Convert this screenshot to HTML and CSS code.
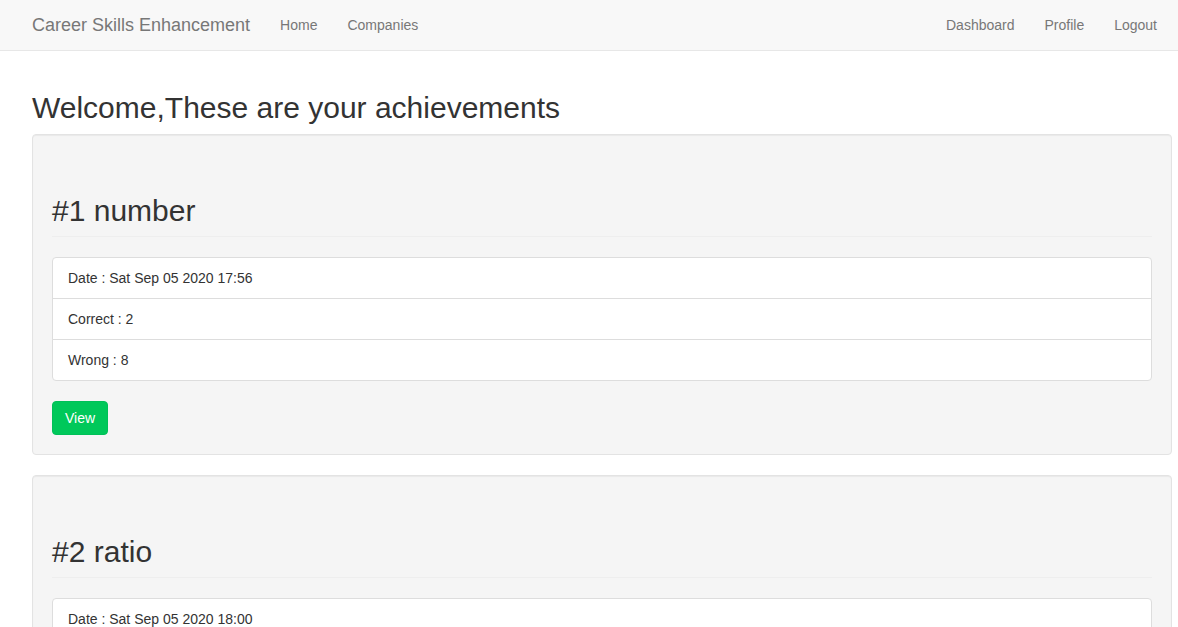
FILE: index.html
```html
<!DOCTYPE html>
<html>
<head>
<meta charset="utf-8">
<title>Career Skills Enhancement</title>
<link rel="stylesheet" href="styles.css">
</head>
<body>
<nav class="navbar">
  <div class="nav-inner">
    <div class="nav-left">
      <a class="brand" href="#">Career Skills Enhancement</a>
      <a class="nav-link" href="#">Home</a>
      <a class="nav-link" href="#">Companies</a>
    </div>
    <div class="nav-right">
      <a class="nav-link" href="#">Dashboard</a>
      <a class="nav-link" href="#">Profile</a>
      <a class="nav-link" href="#">Logout</a>
    </div>
  </div>
</nav>
<main class="main">
  <h2 class="title">Welcome,These are your achievements</h2>
  <div class="well">
    <h2 class="page-header">#1 number</h2>
    <ul class="list-group">
      <li class="list-item">Date : Sat Sep 05 2020 17:56</li>
      <li class="list-item">Correct : 2</li>
      <li class="list-item">Wrong : 8</li>
    </ul>
    <a class="btn" href="#">View</a>
  </div>
  <div class="well">
    <h2 class="page-header">#2 ratio</h2>
    <ul class="list-group">
      <li class="list-item">Date : Sat Sep 05 2020 18:00</li>
      <li class="list-item">Correct : 3</li>
      <li class="list-item">Wrong : 7</li>
    </ul>
    <a class="btn" href="#">View</a>
  </div>
</main>
</body>
</html>
```
FILE: styles.css
```css
* { box-sizing: border-box; }
html, body { margin: 0; padding: 0; }
body {
  font-family: "Liberation Sans", Arial, Helvetica, sans-serif;
  font-size: 14px;
  line-height: 1.42857;
  color: #333;
  background: #fff;
}
a { text-decoration: none; }
.navbar {
  background: #f8f8f8;
  border-bottom: 1px solid #e7e7e7;
  margin-bottom: 20px;
}
.nav-inner {
  display: flex;
  justify-content: space-between;
  padding: 0 6px 0 17px;
  height: 50px;
}
.nav-left, .nav-right { display: flex; align-items: stretch; }
.brand {
  font-size: 18px;
  line-height: 20px;
  padding: 15px;
  color: #777;
  height: 50px;
}
.nav-link {
  color: #777;
  line-height: 20px;
  padding: 15px;
}
.main {
  display: flow-root;
  padding: 0 6px 0 32px;
}
.title {
  font-size: 30px;
  font-weight: 500;
  line-height: 1.1;
  margin: 20px 0 10px;
}
.well {
  background: #f5f5f5;
  border: 1px solid #e3e3e3;
  border-radius: 4px;
  box-shadow: inset 0 1px 1px rgba(0,0,0,.05);
  padding: 19px;
  margin-bottom: 20px;
}
.page-header {
  font-size: 30px;
  font-weight: 500;
  line-height: 1.1;
  margin: 40px 0 20px;
  padding-bottom: 9px;
  border-bottom: 1px solid #eee;
}
.list-group {
  list-style: none;
  margin: 0 0 20px;
  padding: 0;
}
.list-item {
  background: #fff;
  border: 1px solid #ddd;
  padding: 10px 15px;
  margin-bottom: -1px;
  line-height: 20px;
}
.list-item:first-child { border-radius: 4px 4px 0 0; }
.list-item:last-child { border-radius: 0 0 4px 4px; margin-bottom: 0; }
.btn {
  display: inline-block;
  padding: 6px 12px;
  font-size: 14px;
  line-height: 20px;
  border: 1px solid #00c058;
  border-radius: 4px;
  background: #00c85a;
  color: #fff;
}
```
